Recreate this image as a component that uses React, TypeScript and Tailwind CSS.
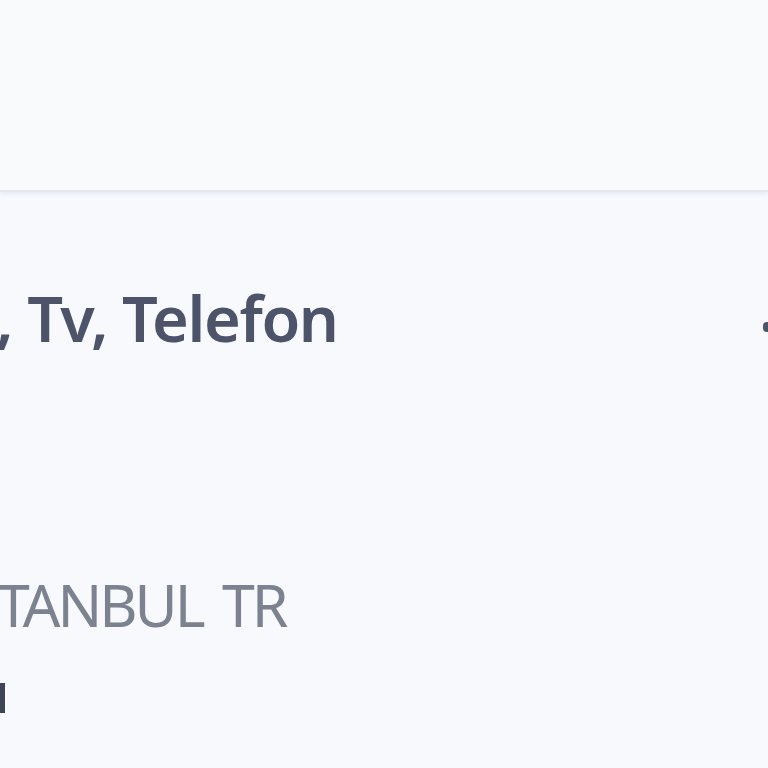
export default function App() {
  return (
    <div
      className="w-[768px] h-[768px] overflow-hidden bg-[#f7f9fc]"
      style={{ fontFamily: '"Noto Sans", "Open Sans", sans-serif' }}
    >
      <header className="h-[192px] bg-[#f8fafc] border-b-2 border-[#e3e9ef] shadow-[0_2px_4px_rgba(200,215,230,0.35)]" />

      <section className="flex items-start justify-between mt-[94px]">
        <h1 className="ml-[-4px] text-[63px] leading-[63px] tracking-[-1.4px] font-semibold text-[#4d5368] whitespace-nowrap">
          , Tv, Telefon
        </h1>
        <span className="mt-[36px] mr-[-20px] w-[25px] h-[10px] bg-[#4d5368] rounded-sm" />
      </section>

      <div className="mt-[226px] ml-[-3px] text-[59px] leading-[59px] tracking-[-3px] [word-spacing:7px] text-[#7d8290] whitespace-nowrap">
        TANBUL TR
      </div>

      <div className="mt-[49px] w-[5px] h-[30px] bg-[#3f4557]" />
    </div>
  );
}
